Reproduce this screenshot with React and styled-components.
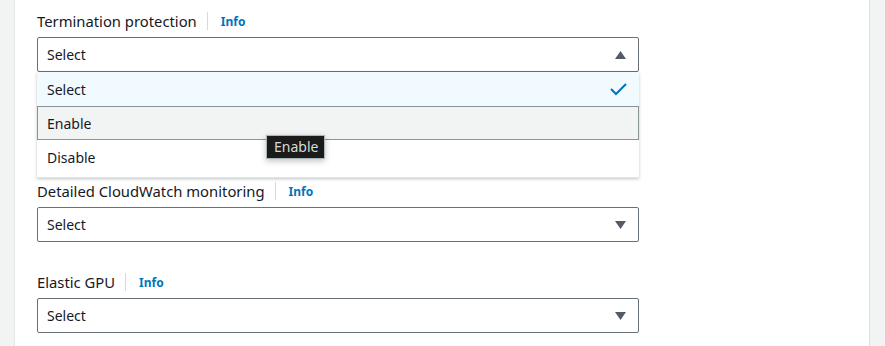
import React from 'react';
import styled, { createGlobalStyle } from 'styled-components';

const GlobalStyle = createGlobalStyle`
  html, body {
    margin: 0;
    padding: 0;
    background: #f2f3f3;
    font-family: "Noto Sans", "Open Sans", sans-serif;
    color: #16191f;
  }
`;

const Page = styled.div`
  display: flex;
  height: 346px;
  padding: 0 15px 0 14px;
  overflow: hidden;
`;

const Panel = styled.div`
  flex: 1;
  background: #fff;
  border-left: 1px solid #e4e7e9;
  border-right: 1px solid #dde1e3;
  padding: 10px 22px 0;
  position: relative;
`;

const Field = styled.div`
  width: 602px;
  position: relative;
  margin-bottom: ${(p) => p.$gap || 29}px;
`;

const LabelRow = styled.div`
  display: flex;
  align-items: center;
  height: 22px;
  margin-bottom: 5px;
`;

const Label = styled.span`
  font-size: 14.8px;
  line-height: 22px;
  color: #16191f;
`;

const Divider = styled.span`
  width: 1px;
  height: 18px;
  background: #d5dbdb;
  margin: 0 13px 0 10px;
`;

const InfoLink = styled.a`
  font-size: 12px;
  font-weight: 700;
  color: #0073bb;
  text-decoration: none;
`;

const Trigger = styled.div`
  display: flex;
  align-items: center;
  justify-content: space-between;
  box-sizing: border-box;
  height: 35px;
  padding: 0 12px 0 9px;
  border: 1px solid #687078;
  border-radius: 2px;
  font-size: 14px;
  background: #fff;
`;

const Caret = styled.svg`
  width: 11px;
  height: 8px;
  fill: #545b64;
`;

const Menu = styled.ul`
  position: absolute;
  top: 62px;
  left: 0;
  right: 0;
  margin: 0;
  padding: 0;
  list-style: none;
  background: #fff;
  border: 1px solid #e1e4e6;
  border-top: none;
  box-shadow: 0 1px 3px rgba(0, 28, 36, 0.25);
  z-index: 2;
`;

const Option = styled.li`
  display: flex;
  align-items: center;
  justify-content: space-between;
  box-sizing: border-box;
  height: ${(p) => p.$h || 34}px;
  padding: 0 10px ${(p) => p.$pb || 0}px 9px;
  font-size: 14px;
  background: ${(p) => (p.$selected ? '#f1faff' : p.$hover ? '#f2f3f3' : '#fff')};
  border: 1px solid ${(p) => (p.$hover ? '#879596' : 'transparent')};
  margin: 0 -1px;
`;

const Check = styled.svg`
  width: 17px;
  height: 13px;
  stroke: #0073bb;
  stroke-width: 2;
  fill: none;
  margin-right: 1px;
`;

const Tooltip = styled.div`
  position: absolute;
  left: 251px;
  top: 135px;
  background: #1b1b1b;
  color: #d5dbdb;
  font-size: 14px;
  line-height: 20px;
  padding: 1px 6px 1px 7px;
  border: 1px solid #aab7b8;
  box-shadow: 0 2px 6px rgba(0, 0, 0, 0.25);
  z-index: 3;
`;

const CaretIcon = ({ up }) => (
  <Caret viewBox="0 0 11 8">
    {up ? <polygon points="0,8 5.5,0 11,8" /> : <polygon points="0,0 11,0 5.5,8" />}
  </Caret>
);

const SelectField = ({ label, open, gap, children }) => (
  <Field $gap={gap}>
    <LabelRow>
      <Label>{label}</Label>
      <Divider />
      <InfoLink href="#">Info</InfoLink>
    </LabelRow>
    <Trigger>
      <span>Select</span>
      <CaretIcon up={open} />
    </Trigger>
    {children}
  </Field>
);

export default function App() {
  return (
    <>
      <GlobalStyle />
      <Page>
        <Panel>
          <SelectField label="Termination protection" open gap={108}>
            <Menu>
              <Option $selected $h={34}>
                <span>Select</span>
                <Check viewBox="0 0 17 13">
                  <polyline points="1,6 6,11 16,1" />
                </Check>
              </Option>
              <Option $hover $h={34}>Enable</Option>
              <Option $h={37} $pb={2}>Disable</Option>
            </Menu>
          </SelectField>
          <SelectField label="Detailed CloudWatch monitoring" />
          <SelectField label="Elastic GPU" />
          <Tooltip>Enable</Tooltip>
        </Panel>
      </Page>
    </>
  );
}
